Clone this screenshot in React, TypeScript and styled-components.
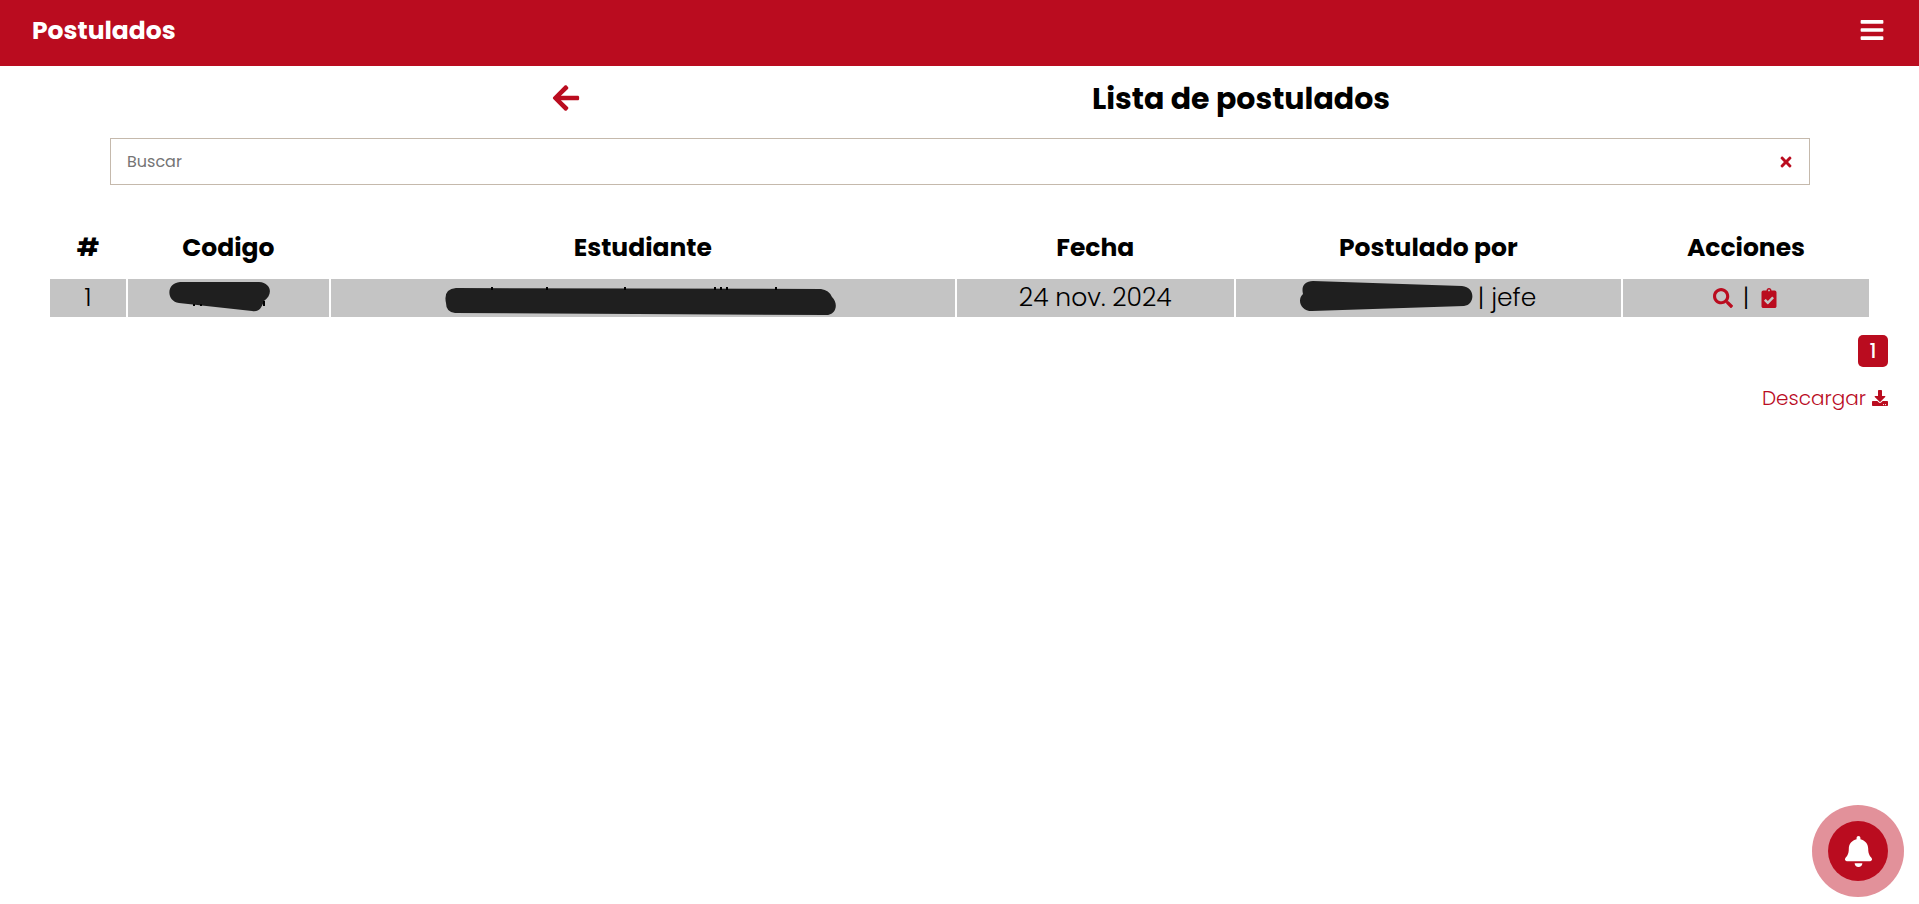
import React from 'react';
import styled, { createGlobalStyle } from 'styled-components';
import {
  FaArrowLeft,
  FaBars,
  FaBell,
  FaClipboardCheck,
  FaDownload,
  FaSearch,
  FaTimes,
} from 'react-icons/fa';

const red = '#ba0c1f';
const ink = '#1f1f1f';

const GlobalStyle = createGlobalStyle`
  *, *::before, *::after { box-sizing: border-box; }
  body {
    margin: 0;
    background: #fff;
    color: #000;
    font-family: Poppins, Inter, "Liberation Sans", sans-serif;
  }
  button, input { font-family: inherit; }
  svg { display: block; }
`;

const Header = styled.header`
  display: flex;
  justify-content: space-between;
  align-items: center;
  height: 66px;
  padding: 0 34px 6px 32px;
  background: ${red};
  color: #fff;
`;

const Brand = styled.h1`
  margin: 0;
  padding-top: 2px;
  font-size: 25px;
  line-height: 38px;
  font-weight: 700;
`;

const IconButton = styled.button<{ $size: number; $color?: string }>`
  display: inline-flex;
  padding: 0;
  border: 0;
  background: none;
  color: ${(p) => p.$color ?? red};
  font-size: ${(p) => p.$size}px;
  cursor: pointer;
`;

const TitleRow = styled.div`
  display: flex;
  justify-content: space-evenly;
  align-items: center;
  height: 72px;
  padding: 0 18px 8px 40px;
`;

const Title = styled.h2`
  margin: 0;
  font-size: 30px;
  line-height: 45px;
  font-weight: 700;
`;

const SearchBox = styled.div`
  display: flex;
  align-items: center;
  height: 47px;
  margin: 0 109px 0 110px;
  padding: 0 15px 0 16px;
  border: 1px solid #c5b9ac;
`;

const SearchInput = styled.input`
  flex: 1;
  min-width: 0;
  padding: 0;
  border: 0;
  outline: 0;
  background: none;
  font-size: 16px;
  line-height: 24px;
  &::placeholder { color: #757575; opacity: 1; }
`;

const Table = styled.table`
  width: 95%;
  margin: 32px auto 0;
  table-layout: fixed;
  border-collapse: separate;
  border-spacing: 2px;
  font-size: 25px;
  line-height: 38px;
  text-align: center;
`;

const Column = styled.col<{ $share: number }>`
  width: ${(p) => p.$share}%;
`;

const HeadCell = styled.th`
  height: 58px;
  padding: 0;
  font-weight: 700;
`;

const Cell = styled.td`
  height: 38px;
  padding: 0;
  background: #c4c4c4;
  font-weight: 300;
`;

const CellContent = styled.div<{ $gap?: number }>`
  display: flex;
  justify-content: center;
  align-items: center;
  gap: ${(p) => p.$gap ?? 0}px;
  height: 38px;
  white-space: pre;
`;

const Footer = styled.div`
  display: flex;
  flex-direction: column;
  align-items: flex-end;
  gap: 16px;
  padding: 16px 31px 0;
`;

const PageButton = styled.button`
  width: 30px;
  height: 32px;
  padding: 0;
  border: 0;
  border-radius: 5px;
  background: ${red};
  color: #fff;
  font-size: 20px;
  line-height: 30px;
  font-weight: 500;
  cursor: pointer;
`;

const DownloadLink = styled.a`
  display: flex;
  align-items: center;
  gap: 6px;
  color: ${red};
  font-size: 20px;
  line-height: 30px;
  font-weight: 300;
  text-decoration: none;
  svg { font-size: 16px; }
`;

const BellButton = styled.button`
  position: fixed;
  right: 31px;
  bottom: 23px;
  display: grid;
  place-items: center;
  width: 60px;
  height: 60px;
  padding: 0;
  border: 0;
  border-radius: 50%;
  background: ${red};
  box-shadow: 0 0 0 16px #e2919a;
  color: #fff;
  font-size: 31px;
  cursor: pointer;
`;

const CodeMark = () => (
  <svg width="118" height="38" viewBox="0 0 118 38" aria-hidden="true">
    <path d="M11 3H90C103 4 104 16 95 22C92 30 90 33 83 32L10 24C-3 22-3 4 11 3Z" fill={ink} />
    <path d="M25 25v2M32 25v2M95 22v5" stroke="#000" strokeWidth="2" />
  </svg>
);

const StudentMark = () => (
  <svg width="396" height="38" viewBox="0 0 396 38" aria-hidden="true">
    <path d="M11 9L376 10Q384 11 387 18C394 25 391 36 381 36L10 34Q1 33 1 24Q-2 10 11 9Z" fill={ink} />
    <path d="M47 8v3M102 8v3M180 8v3M270 8v3M276 8v3M282 8v3M331 8v3" stroke="#000" strokeWidth="2" />
  </svg>
);

const AuthorMark = () => (
  <svg width="173" height="38" viewBox="0 0 173 38" aria-hidden="true">
    <path d="M13 2L162 7C176 8 175 26 164 27L12 32C0 32-3 20 3 15C1 7 5 2 13 2Z" fill={ink} />
  </svg>
);

const columns = [
  { label: '#', share: 4.2 },
  { label: 'Codigo', share: 11.1 },
  { label: 'Estudiante', share: 34.5 },
  { label: 'Fecha', share: 15.3 },
  { label: 'Postulado por', share: 21.3 },
  { label: 'Acciones', share: 13.6 },
];

export default function App() {
  return (
    <>
      <GlobalStyle />
      <Header>
        <Brand>Postulados</Brand>
        <IconButton type="button" $size={26} $color="#fff" aria-label="Menú">
          <FaBars />
        </IconButton>
      </Header>
      <main>
        <TitleRow>
          <IconButton type="button" $size={30} aria-label="Volver">
            <FaArrowLeft />
          </IconButton>
          <Title>Lista de postulados</Title>
        </TitleRow>
        <SearchBox>
          <SearchInput type="text" placeholder="Buscar" aria-label="Buscar" />
          <IconButton type="button" $size={16} aria-label="Limpiar">
            <FaTimes />
          </IconButton>
        </SearchBox>
        <Table>
          <colgroup>
            {columns.map((c) => (
              <Column key={c.label} $share={c.share} />
            ))}
          </colgroup>
          <thead>
            <tr>
              {columns.map((c) => (
                <HeadCell key={c.label} scope="col">{c.label}</HeadCell>
              ))}
            </tr>
          </thead>
          <tbody>
            <tr>
              <Cell>1</Cell>
              <Cell><CellContent><CodeMark /></CellContent></Cell>
              <Cell><CellContent><StudentMark /></CellContent></Cell>
              <Cell>24 nov. 2024</Cell>
              <Cell><CellContent $gap={5}><AuthorMark /><span>{'| jefe   '}</span></CellContent></Cell>
              <Cell>
                <CellContent $gap={10}>
                  <IconButton type="button" $size={20} aria-label="Ver detalle"><FaSearch /></IconButton>
                  |
                  <IconButton type="button" $size={20} aria-label="Evaluar"><FaClipboardCheck /></IconButton>
                </CellContent>
              </Cell>
            </tr>
          </tbody>
        </Table>
        <Footer>
          <PageButton type="button">1</PageButton>
          <DownloadLink href="#descargar">Descargar<FaDownload /></DownloadLink>
        </Footer>
      </main>
      <BellButton type="button" aria-label="Notificaciones"><FaBell /></BellButton>
    </>
  );
}
